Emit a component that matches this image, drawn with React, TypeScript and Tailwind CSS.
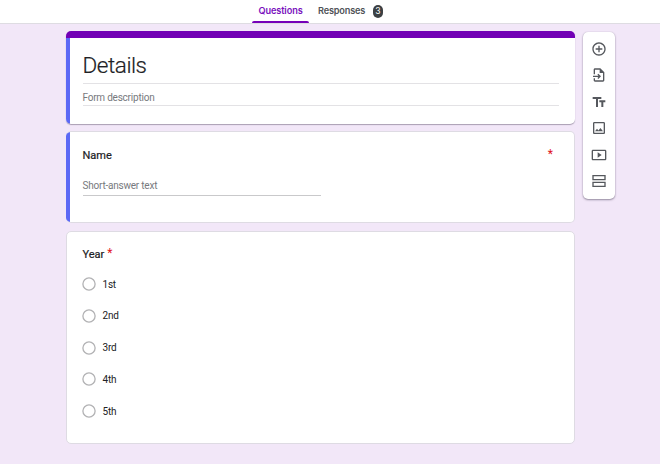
import type { ReactNode } from 'react';

const years = ['1st', '2nd', '3rd', '4th', '5th'];

function ToolIcon({ label, children }: { label: string; children: ReactNode }) {
  return (
    <button aria-label={label} className="flex h-4 w-4 items-center justify-center">
      <svg viewBox="0 0 24 24" className="h-4 w-4 shrink-0 overflow-visible" fill="#55585d">
        {children}
      </svg>
    </button>
  );
}

function Toolbar() {
  return (
    <aside className="flex h-[167px] w-8 flex-col items-center gap-[10.4px] rounded-[5px] bg-white pt-[9px] shadow-[0_1px_2px_rgba(60,50,75,0.5),0_0_1px_rgba(60,50,75,0.25)]">
      <ToolIcon label="Add question">
        <path d="M13 7h-2v4H7v2h4v4h2v-4h4v-2h-4V7zm-1-5C6.48 2 2 6.48 2 12s4.48 10 10 10 10-4.48 10-10S17.52 2 12 2zm0 18c-4.41 0-8-3.59-8-8s3.59-8 8-8 8 3.59 8 8-3.59 8-8 8z" />
      </ToolIcon>
      <ToolIcon label="Import questions">
        <path d="M14 2H6C4.9 2 4 2.9 4 4v7h2V4h7v5h5v11H6v-3H4v3c0 1.1.9 2 2 2h12c1.1 0 2-.9 2-2V8l-6-6zM11 10l-1.4 1.4L11.2 13H3v2h8.2l-1.6 1.6L11 18l4-4-4-4z" />
      </ToolIcon>
      <ToolIcon label="Add title and description">
        <path d="M2.5 4.500v3h5v12h3v-12h5v-3h-13zm19 5h-9v3h3v7h3v-7h3v-3z" />
      </ToolIcon>
      <ToolIcon label="Add image">
        <path d="M19 5v14H5V5h14m0-2H5c-1.100 0-2 .9-2 2v14c0 1.100.9 2 2 2h14c1.100 0 2-.9 2-2V5c0-1.100-.9-2-2-2zm-4.860 8.860l-3 3.870L9 13.140 6 17h12l-3.860-5.140z" />
      </ToolIcon>
      <ToolIcon label="Add video">
        <path d="M10 8v8l6-4-6-4zm11-4H3c-1.100 0-2 .9-2 2v12c0 1.100.9 2 2 2h18c1.100 0 2-.9 2-2V6c0-1.100-.9-2-2-2zm0 14H3V6h18v12z" />
      </ToolIcon>
      <ToolIcon label="Add section">
        <path d="M2 3v8h20V3H2zm18 6H4V5h16v4zM2 13v8h20v-8H2zm18 6H4v-4h16v4z" />
      </ToolIcon>
    </aside>
  );
}

export default function App() {
  return (
    <div className="flex h-[464px] w-[660px] flex-col overflow-hidden bg-[#f2e7f8] font-['Roboto',sans-serif] text-[#202124]">
      <header className="flex h-6 shrink-0 border-b border-[#dedce2] bg-white pl-[252px] font-['Inter',sans-serif] text-[9.200px] font-semibold leading-[22px]">
        <div className="relative w-[57px] text-center font-semibold tracking-[-0.1px] text-[#7a12bd]">
          Questions
          <span className="absolute bottom-0 left-0 h-0.5 w-full rounded-t-sm bg-[#7600b8]" />
        </div>
        <div className="ml-[9px] w-[47px] whitespace-nowrap tracking-[-0.180px] text-[#505357]">Responses</div>
        <span className="ml-2 mt-[5px] flex h-[13px] w-[10px] items-center justify-center rounded-[5px] bg-[#3c4043] font-['Roboto',sans-serif] text-[9px] font-normal leading-none text-white">3</span>
      </header>

      <main className="flex pl-[66px] pt-[7px]">
        <div className="flex w-[509px] flex-col gap-2">
          <section className="h-[93px] overflow-hidden rounded-[5px] border-t-[7px] border-[#7200b5] bg-white shadow-[0_1px_1px_rgba(60,50,75,0.4)]">
            <div className="h-full border-l-4 border-[#5c69f5] pl-[12.500px] pr-4 pt-[11px]">
              <h1 className="h-[35px] border-b border-[#e3e2e5] text-[22.500px] font-light leading-[32px] tracking-[-0.450px] [-webkit-text-stroke:0.200px_#202124]">Details</h1>
              <p className="h-[22px] border-b border-[#e3e2e5] pt-[3px] text-[10px] leading-[22px] tracking-[-0.220px] text-[#77797d]">Form description</p>
            </div>
          </section>

          <section className="-mt-px flex h-[92px] overflow-hidden rounded-[5px] border border-l-0 border-[#dedbe3] bg-white">
            <div className="-my-px w-1 shrink-0 bg-[#5c69f5]" />
            <div className="w-full pl-[12.500px] pr-[21px] pt-[15px]">
              <div className="flex h-[17px] justify-between text-[11px] leading-[17px]">
                <h2 className="[-webkit-text-stroke:0.200px_#202124]">Name</h2>
                <span className="text-[12px] leading-[15px] text-[#e01020]">*</span>
              </div>
              <p className="mt-[12px] h-5 w-[238px] border-b border-[#c9c9cb] text-[10px] leading-5 tracking-[-0.220px] text-[#77797d]">Short-answer text</p>
            </div>
          </section>

          <section className="h-[213px] rounded-[5px] border border-[#dedbe3] bg-white pl-[15.500px] pt-[14px]">
            <h2 className="flex h-[18px] gap-[3px] text-[11px] leading-[17px]"><span className="[-webkit-text-stroke:0.200px_#202124]">Year</span><span className="text-[12px] leading-[15px] text-[#e01020]">*</span></h2>
            <div className="mt-[13px] flex flex-col gap-[17.800px]">
              {years.map((year) => (
                <label key={year} className="flex h-3.5 items-center text-[10px] tracking-[-0.220px]">
                  <svg viewBox="0 0 14 14" className="-ml-[0.500px] h-3.5 w-3.5" fill="none" stroke="#b2b2b4" strokeWidth="1.300">
                    <circle cx="7" cy="7" r="6.100" />
                  </svg>
                  <span className="ml-[6.500px]">{year}</span>
                </label>
              ))}
            </div>
          </section>
        </div>
        <div className="ml-2 pt-px"><Toolbar /></div>
      </main>
    </div>
  );
}
